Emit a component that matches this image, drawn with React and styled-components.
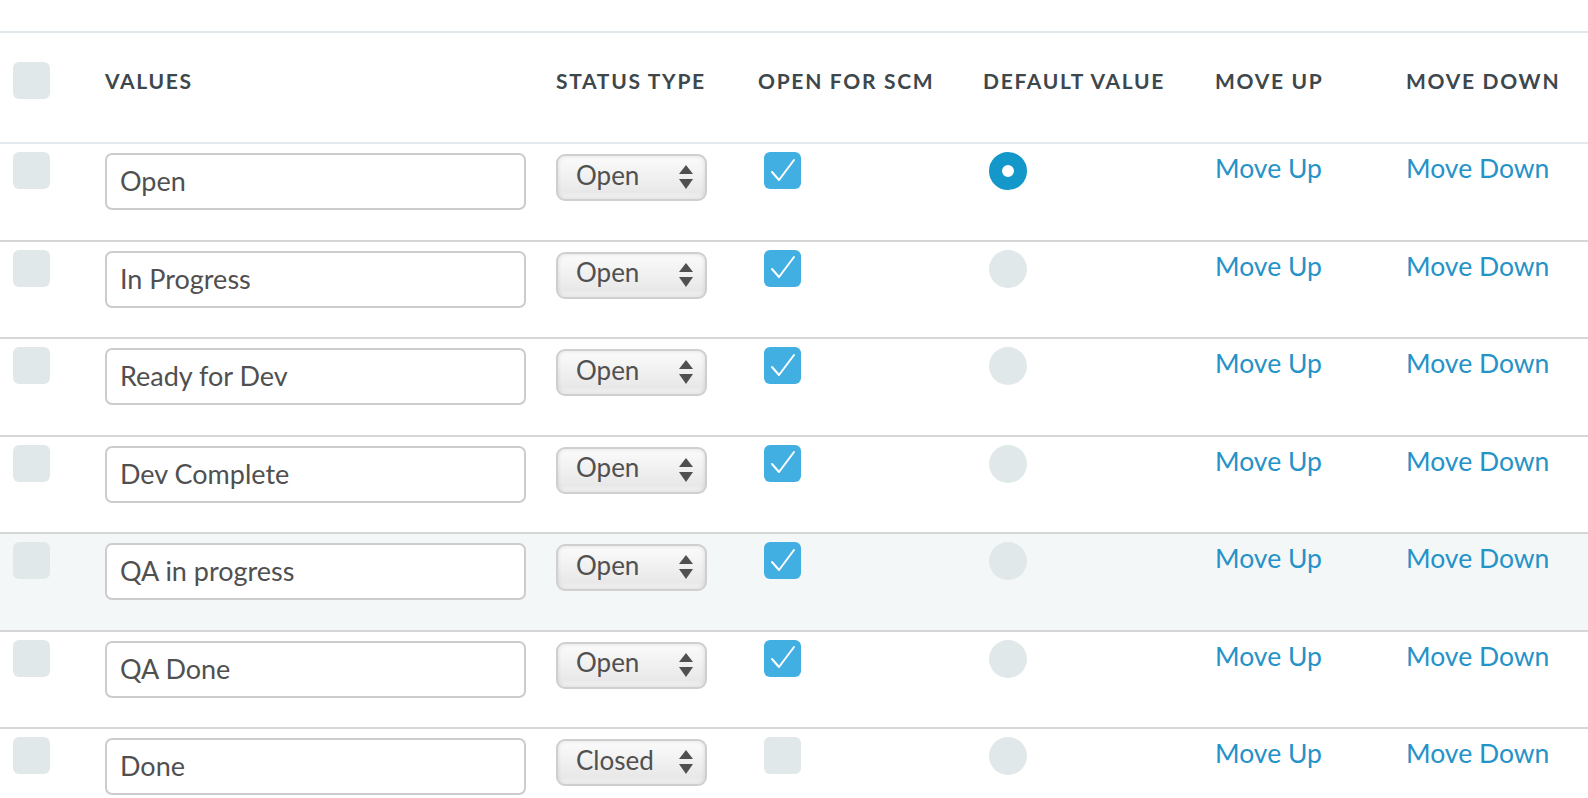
import styled, { createGlobalStyle } from "styled-components";

const GlobalStyle = createGlobalStyle`
  body {
    margin: 0;
    background: #ffffff;
    font-family: "Lato", "Liberation Sans", sans-serif;
  }
`;

const rows = [
  { value: "Open", status: "Open", scm: true, isDefault: true },
  { value: "In Progress", status: "Open", scm: true },
  { value: "Ready for Dev", status: "Open", scm: true },
  { value: "Dev Complete", status: "Open", scm: true },
  { value: "QA in progress", status: "Open", scm: true, hover: true },
  { value: "QA Done", status: "Open", scm: true },
  { value: "Done", status: "Closed", scm: false },
];

const Check = () => (
  <svg width="28" height="28" viewBox="0 0 28 28">
    <polyline
      points="3,15 10,23 25,3"
      fill="none"
      stroke="#fff"
      strokeWidth="2"
      strokeLinecap="round"
      strokeLinejoin="round"
    />
  </svg>
);

const Arrows = () => (
  <svg width="14" height="25" viewBox="0 0 14 25">
    <polygon points="7,0 14,9 0,9" fill="#505050" />
    <polygon points="0,14 14,14 7,24" fill="#505050" />
  </svg>
);

const App = () => {
  return (
    <Page>
      <GlobalStyle />
      <Table>
        <HeaderRow>
          <CheckCell>
            <Box />
          </CheckCell>
          <Th>Values</Th>
          <Th>Status Type</Th>
          <Th>Open for SCM</Th>
          <Th>Default Value</Th>
          <Th>Move Up</Th>
          <Th>Move Down</Th>
        </HeaderRow>

        {rows.map((r) => (
          <Row key={r.value} $hover={r.hover}>
            <CheckCell>
              <Box />
            </CheckCell>
            <Cell>
              <TextInput defaultValue={r.value} />
            </Cell>
            <Cell>
              <Select>
                <span>{r.status}</span>
                <Arrows />
              </Select>
            </Cell>
            <Cell $indent>
              <Box $checked={r.scm}>{r.scm && <Check />}</Box>
            </Cell>
            <Cell $indent>
              <Radio $on={r.isDefault} />
            </Cell>
            <Cell>
              <Link href="#">Move Up</Link>
            </Cell>
            <Cell>
              <Link href="#">Move Down</Link>
            </Cell>
          </Row>
        ))}
      </Table>
    </Page>
  );
};

export default App;

const Page = styled.div`
  padding-top: 31px;
`;

const Table = styled.div`
  border-top: 2px solid #e1e8eb;
`;

const cols = "105px 451px 202px 225px 232px 191px 1fr";

const HeaderRow = styled.div`
  display: grid;
  grid-template-columns: ${cols};
  align-items: center;
  box-sizing: border-box;
  height: 111px;
  padding-bottom: 15px;
  border-bottom: 2px solid #e3eaed;
`;

const Row = styled.div`
  display: grid;
  grid-template-columns: ${cols};
  align-items: start;
  box-sizing: border-box;
  height: 97.5px;
  padding-top: 8px;
  border-bottom: 2px solid #d6d6d6;
  background: ${(p) => (p.$hover ? "#f4f7f8" : "transparent")};
`;

const CheckCell = styled.div`
  padding-left: 13px;
`;

const Cell = styled.div`
  padding-left: ${(p) => (p.$indent ? "6px" : "0")};
`;

const Th = styled.div`
  font-size: 21px;
  font-weight: 700;
  letter-spacing: 1.7px;
  text-transform: uppercase;
  color: #3d474c;
`;

const Box = styled.div`
  width: 37px;
  height: 37px;
  border-radius: 6px;
  background: ${(p) => (p.$checked ? "#41afe1" : "#e1e8ea")};
  display: flex;
  align-items: center;
  justify-content: center;
`;

const Radio = styled.div`
  width: 38px;
  height: 38px;
  border-radius: 50%;
  box-sizing: border-box;
  background: ${(p) => (p.$on ? "#fff" : "#e1e8ea")};
  border: ${(p) => (p.$on ? "13px solid #1398c9" : "none")};
`;

const TextInput = styled.input`
  box-sizing: border-box;
  width: 421px;
  height: 57px;
  margin-top: 1px;
  padding: 0 13px 2px;
  border: 2px solid #cccccc;
  border-radius: 7px;
  background: #fff;
  font-family: "Lato", "Liberation Sans", sans-serif;
  font-size: 27px;
  color: #505050;
  outline: none;
`;

const Select = styled.div`
  box-sizing: border-box;
  width: 151px;
  height: 47px;
  margin-top: 2px;
  padding: 0 12px 6px 18px;
  display: flex;
  align-items: center;
  justify-content: space-between;
  border: 2px solid #cfcfcf;
  border-radius: 9px;
  background: linear-gradient(#fbfbfb, #e8e8e8 85%, #f4f4f4);
  box-shadow: inset 0 0 4px rgba(0, 0, 0, 0.12);
  font-size: 26px;
  color: #505050;

  svg {
    margin-top: 6px;
  }
`;

const Link = styled.a`
  display: block;
  margin-top: 0;
  font-size: 26.5px;
  color: #2592c8;
  text-decoration: none;
`;
